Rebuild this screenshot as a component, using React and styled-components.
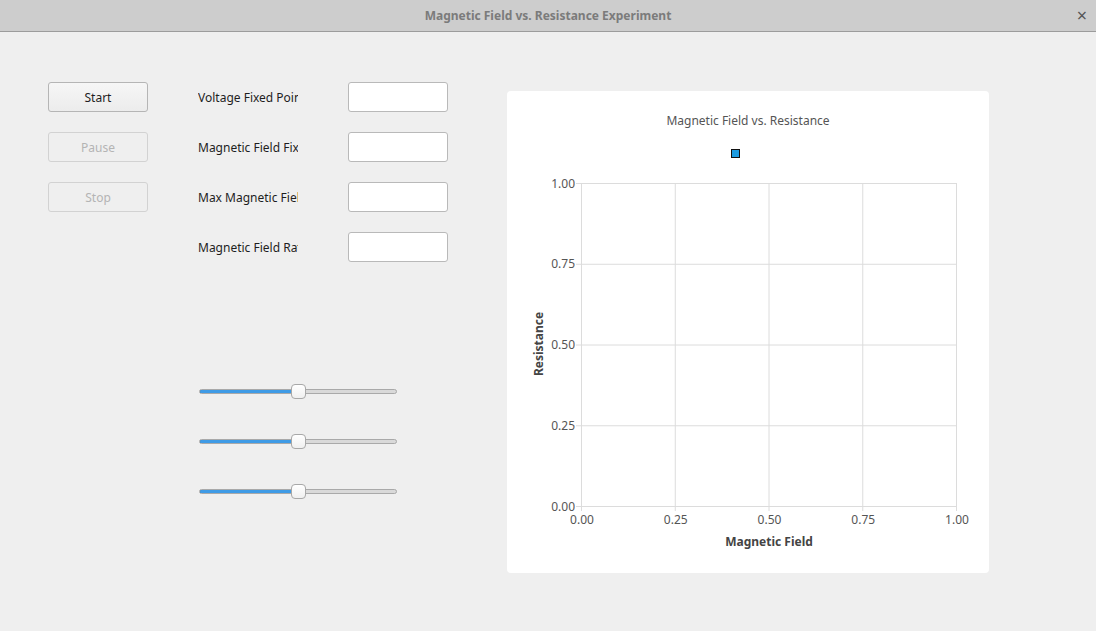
import React from "react";
import styled, { createGlobalStyle } from "styled-components";

const Global = createGlobalStyle`
  html, body {
    margin: 0;
    padding: 0;
    background: #efefef;
    font-family: "Noto Sans", "Open Sans", sans-serif;
  }
`;

const Window = styled.div`
  width: 1096px;
  height: 631px;
  display: flex;
  flex-direction: column;
  background: #efefef;
  overflow: hidden;
`;

const TitleBar = styled.div`
  height: 31px;
  border-bottom: 1px solid #9c9c9c;
  background: #cdcdcd;
  display: flex;
  align-items: center;
  justify-content: center;
  position: relative;
`;

const TitleText = styled.div`
  font-size: 12px;
  font-weight: bold;
  color: #7b7b7b;
`;

const CloseBtn = styled.div`
  position: absolute;
  right: 9px;
  top: 6px;
  font-size: 18px;
  color: #555;
  line-height: 18px;
`;

const Content = styled.div`
  display: flex;
  padding: 50px 0 0 48px;
`;

const LeftPanel = styled.div`
  display: flex;
  flex-direction: column;
`;

const FormGrid = styled.div`
  display: grid;
  grid-template-columns: 100px 100px 100px;
  grid-auto-rows: 30px;
  column-gap: 50px;
  row-gap: 20px;
`;

const Button = styled.button`
  box-sizing: border-box;
  width: 100px;
  height: 30px;
  font-family: "Noto Sans", sans-serif;
  font-size: 12px;
  color: ${(p) => (p.disabled ? "#b4b4b4" : "#1e1e1e")};
  background: ${(p) => (p.disabled ? "#efefef" : "linear-gradient(#f6f6f6, #ececec)")};
  border: 1px solid ${(p) => (p.disabled ? "#d2d2d2" : "#b5b5b5")};
  border-radius: 3px;
  padding: 0;
`;

const Label = styled.div`
  grid-column: 2;
  font-size: 12px;
  color: #1e1e1e;
  line-height: 30px;
  padding-top: 1px;
  white-space: nowrap;
  overflow: hidden;
`;

const Input = styled.div`
  grid-column: 3;
  box-sizing: border-box;
  background: #fff;
  border: 1px solid #b9b9b9;
  border-radius: 3px;
`;

const SliderStack = styled.div`
  display: flex;
  flex-direction: column;
  gap: 36px;
  margin: 122px 0 0 151px;
`;

const Slider = styled.div`
  position: relative;
  width: 198px;
  height: 14px;
  display: flex;
  align-items: center;
`;

const Groove = styled.div`
  box-sizing: border-box;
  width: 100%;
  height: 5px;
  border-radius: 3px;
  background: #d9d9d9;
  border: 1px solid #a9a9a9;
  overflow: hidden;
  display: flex;
`;

const Fill = styled.div`
  height: 100%;
  background: #3f9be6;
  box-shadow: 0 0 0 1px #1f5f94;
`;

const Handle = styled.div`
  position: absolute;
  top: 0;
  box-sizing: border-box;
  width: 15px;
  height: 15px;
  margin-left: -7px;
  border-radius: 4px;
  background: linear-gradient(#ffffff, #f0f0f0);
  border: 1px solid #a8a8a8;
`;

const ChartCard = styled.div`
  margin: 9px 0 0 59px;
  width: 482px;
  height: 482px;
  background: #fff;
  border-radius: 4px;
`;

const buttons = [
  { text: "Start", disabled: false },
  { text: "Pause", disabled: true },
  { text: "Stop", disabled: true },
];

const labels = [
  "Voltage Fixed Point",
  "Magnetic Field Fixed Point",
  "Max Magnetic Field",
  "Magnetic Field Rate",
];

function FieldSlider({ value }) {
  return (
    <Slider>
      <Groove>
        <Fill style={{ width: `${value * 100}%` }} />
      </Groove>
      <Handle style={{ left: `${value * 100}%` }} />
    </Slider>
  );
}

function Chart() {
  const x0 = 74, x1 = 449, y0 = 92, y1 = 415;
  const ticks = [0, 0.25, 0.5, 0.75, 1];
  const grid = "#dcdcdc";
  const txt = "#555";
  return (
    <svg width="482" height="482" fontFamily="Noto Sans, sans-serif">
      <text x="241" y="34" textAnchor="middle" fontSize="12" fill={txt}>
        Magnetic Field vs. Resistance
      </text>
      <rect x="224.5" y="58.5" width="8" height="8" fill="#1c9be0" stroke="#111" strokeWidth="1" />
      {ticks.map((t) => {
        const x = x0 + (x1 - x0) * t;
        const y = y1 - (y1 - y0) * t;
        return (
          <g key={t}>
            <line x1={x + 0.5} y1={y0} x2={x + 0.5} y2={y1 + 5} stroke={grid} />
            <line x1={x0 - 5} y1={y + 0.5} x2={x1} y2={y + 0.5} stroke={grid} />
            <text x={x0 - 6} y={y + 4.5} textAnchor="end" fontSize="12" fill={txt}>
              {t.toFixed(2)}
            </text>
            <text x={x + 1} y={y1 + 18} textAnchor="middle" fontSize="12" fill={txt}>
              {t.toFixed(2)}
            </text>
          </g>
        );
      })}
      <text x="262" y="455" textAnchor="middle" fontSize="12" fontWeight="bold" fill="#444">
        Magnetic Field
      </text>
      <text
        transform="translate(36 253) rotate(-90)"
        textAnchor="middle"
        fontSize="12"
        fontWeight="bold"
        fill="#444"
      >
        Resistance
      </text>
    </svg>
  );
}

export default function App() {
  return (
    <Window>
      <Global />
      <TitleBar>
        <TitleText>Magnetic Field vs. Resistance Experiment</TitleText>
        <CloseBtn>×</CloseBtn>
      </TitleBar>
      <Content>
        <LeftPanel>
          <FormGrid>
            {labels.map((l, i) => (
              <React.Fragment key={l}>
                {buttons[i] ? (
                  <Button disabled={buttons[i].disabled} style={{ gridRow: i + 1 }}>
                    {buttons[i].text}
                  </Button>
                ) : null}
                <Label style={{ gridRow: i + 1 }}>{l}</Label>
                <Input style={{ gridRow: i + 1 }} />
              </React.Fragment>
            ))}
          </FormGrid>
          <SliderStack>
            <FieldSlider value={0.5} />
            <FieldSlider value={0.5} />
            <FieldSlider value={0.5} />
          </SliderStack>
        </LeftPanel>
        <ChartCard>
          <Chart />
        </ChartCard>
      </Content>
    </Window>
  );
}
